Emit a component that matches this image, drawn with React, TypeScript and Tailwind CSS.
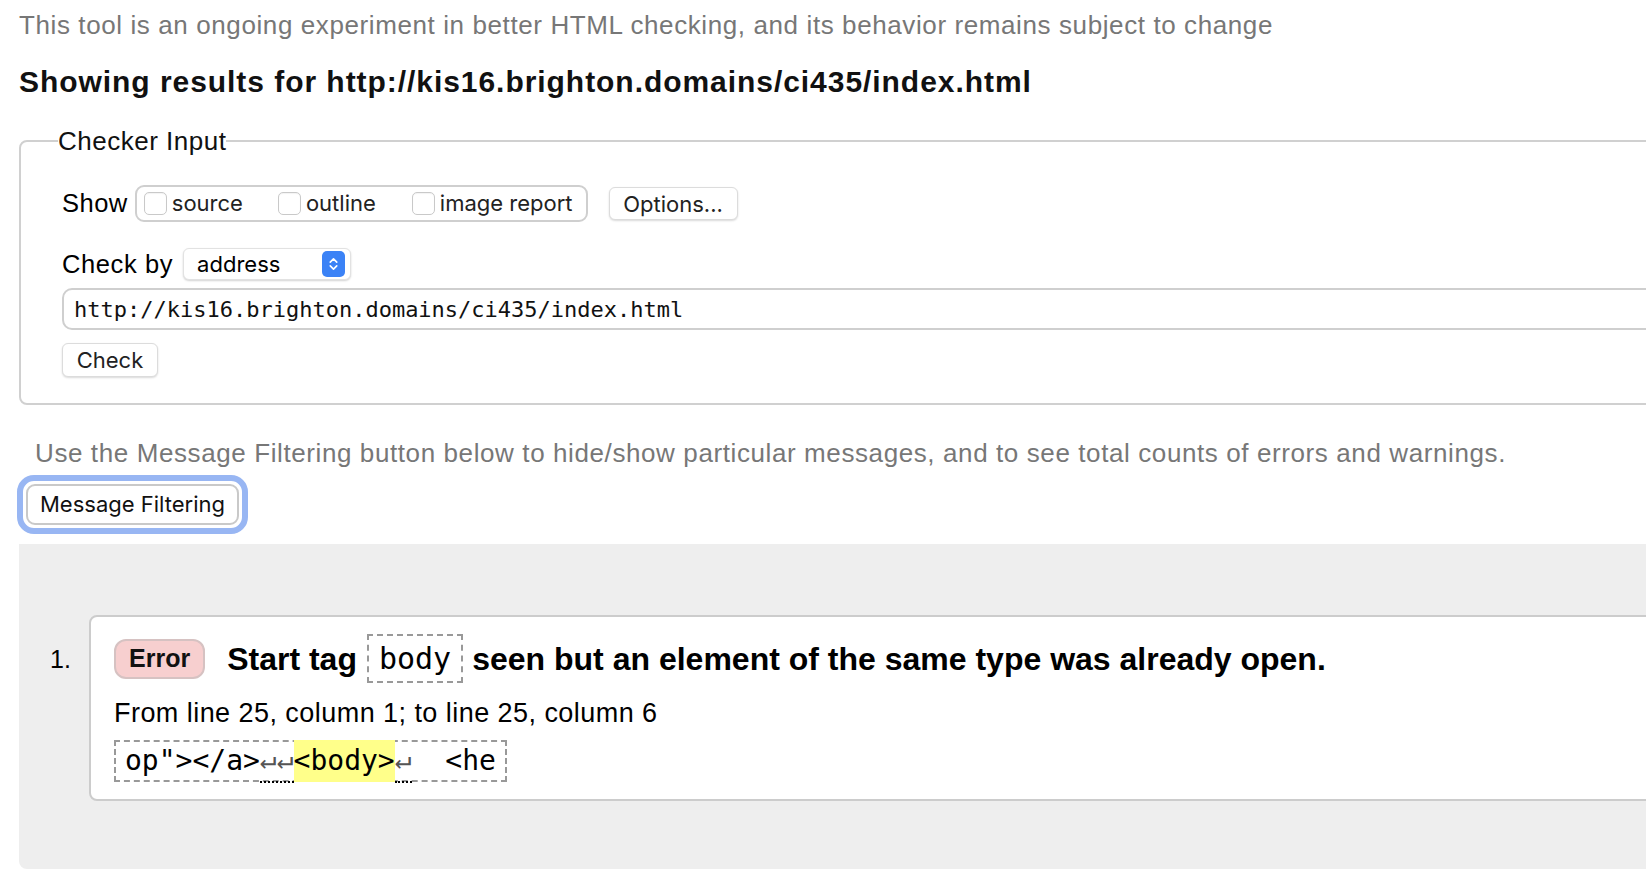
import { ChevronDown, ChevronUp } from 'lucide-react'

const sans = { fontFamily: '"Liberation Sans", Arial, sans-serif' }
const ui = { fontFamily: 'Inter, "Open Sans", sans-serif' }
const mono = { fontFamily: '"DejaVu Sans Mono", monospace' }

function Checkbox({ label }: { label: string }) {
    return (
        <label className="flex items-center gap-[5px]">
            <span className="w-[23px] h-[23px] rounded-[5px] border border-[#c9c9c9] bg-white shadow-[inset_0_1px_1px_rgba(0,0,0,0.05)]" />
            <span>{label}</span>
        </label>
    )
}

export default function App() {
    return (
        <div className="w-[1646px] h-[878px] overflow-hidden bg-white text-black" style={sans}>
            <div className="w-[1720px] pl-[19px]">
                <p className="pt-[10px] text-[26px] leading-[30px] tracking-[0.6px] text-[#777]">
                    This tool is an ongoing experiment in better HTML checking, and its behavior remains subject to change
                </p>
                <h2 className="mt-[24px] text-[30px] leading-[36px] tracking-[0.95px] font-bold text-[#111]">
                    Showing results for http://kis16.brighton.domains/ci435/index.html
                </h2>

                <fieldset className="mt-[26px] border-2 border-[#d0d0d0] rounded-[8px] pl-[41px] pb-[26px]">
                    <legend className="ml-[-4px] text-[26px] leading-[30px] tracking-[0.5px] text-[#111]">Checker Input</legend>

                    <div className="mt-[29px] flex items-center h-[37px] text-[25.5px] tracking-[0.5px]">
                        <span className="mr-[7px]">Show</span>
                        <div
                            className="flex items-center h-[37px] border-2 border-[#cfcfcf] rounded-[9px] pl-[7px] pr-[13px] text-[22px] tracking-normal text-[#222]"
                            style={ui}
                        >
                            <Checkbox label="source" />
                            <span className="w-[35px]" />
                            <Checkbox label="outline" />
                            <span className="w-[36px]" />
                            <Checkbox label="image report" />
                        </div>
                        <button
                            className="ml-[21px] h-[33px] w-[129px] rounded-[6px] bg-white border border-[#dcdcdc] shadow-[0_1px_2px_rgba(0,0,0,0.15)] text-[22px] tracking-normal text-[#222]"
                            style={ui}
                        >
                            Options...
                        </button>
                    </div>

                    <div className="mt-[26px] flex items-center h-[32px] text-[25.5px] tracking-[0.6px]">
                        <span className="mr-[10px]">Check by</span>
                        <div
                            className="flex items-center justify-between h-[32px] w-[168px] pl-[13px] pr-[5px] rounded-[6px] bg-white border border-[#e2e2e2] shadow-[0_1px_2px_rgba(0,0,0,0.18)] text-[22px] tracking-normal"
                            style={ui}
                        >
                            <span>address</span>
                            <span className="flex flex-col items-center justify-center w-[23px] h-[26px] rounded-[5px] bg-[#3b82f6]">
                                <ChevronUp size={13} strokeWidth={3} className="text-white -mb-[3px]" />
                                <ChevronDown size={13} strokeWidth={3} className="text-white -mt-[3px]" />
                            </span>
                        </div>
                    </div>

                    <div
                        className="mt-[8px] h-[42px] w-[1700px] flex items-center pl-[10px] border-2 border-[#cfcfcf] rounded-[10px] text-[22px] text-[#111]"
                        style={mono}
                    >
                        http://kis16.brighton.domains/ci435/index.html
                    </div>

                    <button
                        className="mt-[13px] h-[34px] w-[96px] rounded-[6px] bg-white border border-[#dcdcdc] shadow-[0_1px_2px_rgba(0,0,0,0.15)] text-[22px] text-[#222]"
                        style={ui}
                    >
                        Check
                    </button>
                </fieldset>

                <p className="mt-[33px] ml-[16px] text-[26px] leading-[30px] tracking-[0.6px] text-[#777]">
                    Use the Message Filtering button below to hide/show particular messages, and to see total counts of errors and warnings.
                </p>

                <div className="mt-[7px] ml-[-2px] flex w-fit border-[6px] border-[#98b6f3] rounded-[17px] p-[3px]">
                    <button
                        className="h-[41px] px-[12px] rounded-[9px] bg-white border-2 border-[#c9c9c9] text-[22px] text-[#111]"
                        style={ui}
                    >
                        Message Filtering
                    </button>
                </div>

                <div className="mt-[10px] h-[325px] bg-[#eeeeee] rounded-bl-[8px] pt-[71px] pl-[31px] flex">
                    <span className="w-[39px] mt-[28px] text-[25px] leading-[32px]">1.</span>
                    <div className="flex-1 h-[186px] bg-white border-2 border-[#cccccc] rounded-[8px] pl-[23px] pt-[17px]">
                        <div className="flex items-center h-[49px]">
                            <span className="h-[40px] px-[13px] flex items-center rounded-[12px] bg-[#f7cfcf] border-2 border-[#d6c2c2] text-[25px] font-bold text-[#111]">
                                Error
                            </span>
                            <span className="ml-[22px] text-[32px] font-bold">Start tag</span>
                            <span
                                className="ml-[10px] h-[49px] px-[10px] flex items-center border-2 border-dashed border-[#999] text-[30px]"
                                style={mono}
                            >
                                body
                            </span>
                            <span className="ml-[9px] text-[32px] font-bold">seen but an element of the same type was already open.</span>
                        </div>
                        <p className="mt-[14px] text-[27px] leading-[32px] tracking-[0.45px]">From line 25, column 1; to line 25, column 6</p>
                        <div
                            className="mt-[11px] flex w-fit items-center h-[42px] px-[9px] border-2 border-dashed border-[#999] text-[28px] whitespace-pre"
                            style={mono}
                        >
                            <span>op"&gt;&lt;/a&gt;</span>
                            <span className="text-[#555] border-b-2 border-dotted border-black">↵↵</span>
                            <span className="bg-[#ffff8a]">&lt;body&gt;</span>
                            <span className="text-[#555] border-b-2 border-dotted border-black">↵</span>
                            <span>  &lt;he</span>
                        </div>
                    </div>
                </div>
            </div>
        </div>
    )
}
